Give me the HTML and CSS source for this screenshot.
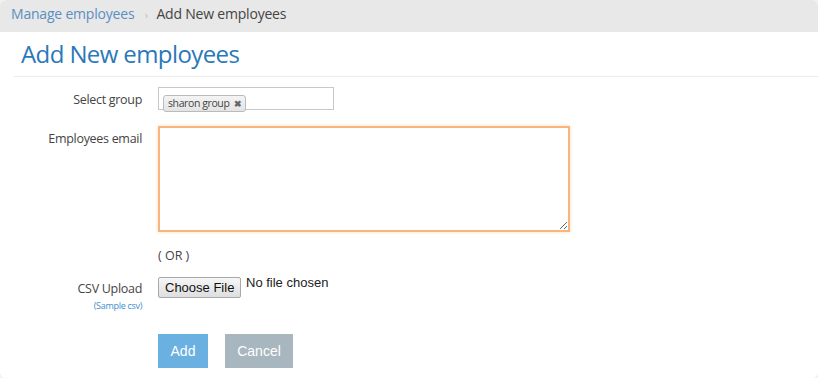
FILE: index.html
```html
<!DOCTYPE html>
<html lang="en">
<head>
  <meta charset="UTF-8" />
  <title>Add New employees</title>
  <link rel="stylesheet" href="styles.css">
</head>
<body>

<div class="panel">
  <div class="crumbs">
    <a href="#">Manage employees</a>
    <span class="sep">›</span>
    <span class="current">Add New employees</span>
  </div>

  <h1 class="page-title">Add New employees</h1>

  <form class="emp-form">
    <div class="row">
      <label class="lbl">Select group</label>
      <div class="ctl">
        <div class="tag-box">
          <span class="tag">sharon group <b>✖</b></span>
        </div>
      </div>
    </div>

    <div class="row">
      <label class="lbl">Employees email</label>
      <div class="ctl">
        <textarea class="emails"></textarea>
      </div>
    </div>

    <div class="row or-row">
      <div class="lbl"></div>
      <div class="ctl or">( OR )</div>
    </div>

    <div class="row csv">
      <div class="lbl">
        CSV Upload
        <a href="#" class="sample">(Sample csv)</a>
      </div>
      <div class="ctl">
        <span class="file-btn">Choose File</span>
        <span class="file-name">No file chosen</span>
      </div>
    </div>

    <div class="row actions">
      <div class="lbl"></div>
      <div class="ctl">
        <button type="button" class="btn btn-add">Add</button>
        <button type="button" class="btn btn-cancel">Cancel</button>
      </div>
    </div>
  </form>
</div>

</body>
</html>
```

FILE: styles.css
```css
* {
  margin: 0; padding: 0; box-sizing: border-box;
}
body {
  background: #f2f2f2;
  font-family: 'Open Sans', 'Noto Sans', sans-serif;
  color: #444;
}

.panel {
  background: white;
  height: 378px;
  border-radius: 6px;
  overflow: hidden;
}

.crumbs {
  background: #e8e8e8;
  height: 32px;
  padding: 4px 11px 0;
  font-size: 14px;
  letter-spacing: -0.2px;
}
.crumbs a {
  color: #5a8fc2;
  text-decoration: none;
}
.crumbs .sep {
  color: #bbb;
  font-size: 11px;
  margin: 0 5px 0 7px;
}
.crumbs .current {
  color: #444;
}

.page-title {
  margin: 0 0 0 14px;
  padding: 5px 7px 6px;
  font-size: 24px;
  line-height: 33px;
  font-weight: 400;
  color: #2b78b9;
  letter-spacing: -0.6px;
  border-bottom: 1px solid #ececec;
}

.emp-form {
  padding-top: 10px;
}
.row {
  display: flex;
  gap: 16px;
  margin-bottom: 16px;
}
.lbl {
  width: 142px;
  flex-shrink: 0;
  text-align: right;
  font-size: 12.5px;
  color: #444;
  letter-spacing: -0.3px;
  padding-top: 4px;
}

.tag-box {
  width: 176px;
  height: 23px;
  border: 1px solid #c8c8c8;
  padding: 2px 4px;
}
.tag {
  display: inline-block;
  border: 1px solid #bbb;
  border-radius: 3px;
  background: linear-gradient(#f4f4f4, #e4e4e4);
  font-size: 10.5px;
  line-height: 15px;
  padding: 0 4px;
  letter-spacing: -0.4px;
}
.tag b {
  font-size: 9px;
  color: #666;
  margin-left: 2px;
}

.emails {
  display: block;
  width: 412px;
  height: 106px;
  border: 2px solid #f9b57d;
  box-shadow: 0 0 3px rgba(249, 181, 125, 0.5);
  outline: none;
  resize: both;
}

.row:nth-child(2) {
  margin-bottom: 14px;
}
.or {
  font-size: 12.5px;
  padding-top: 1px;
}
.or-row {
  margin-bottom: 11px;
}

.csv {
  margin-bottom: 0;
  height: 59px;
}
.csv .lbl {
  padding-top: 5px;
}
.sample {
  display: block;
  font-size: 9px;
  color: #3a8fd0;
  text-decoration: none;
  margin-top: 2px;
}
.csv .ctl {
  font-family: 'Liberation Sans', Arial, sans-serif;
  font-size: 13px;
}
.file-btn {
  display: inline-block;
  height: 21px;
  line-height: 19px;
  padding: 0 6px;
  border: 1px solid #a9a9a9;
  border-radius: 2px;
  background: linear-gradient(#f6f6f6, #dedede);
  color: #111;
}
.file-name {
  color: #222;
  margin-left: 1px;
  vertical-align: 5px;
}

.actions .ctl {
  display: flex;
  gap: 17px;
}
.btn {
  height: 34px;
  border: none;
  color: white;
  font-family: 'Liberation Sans', Arial, sans-serif;
  font-size: 14px;
}
.btn-add {
  width: 50px;
  background: #6ab0e1;
}
.btn-cancel {
  width: 68px;
  background: #a8b6c0;
}
```
